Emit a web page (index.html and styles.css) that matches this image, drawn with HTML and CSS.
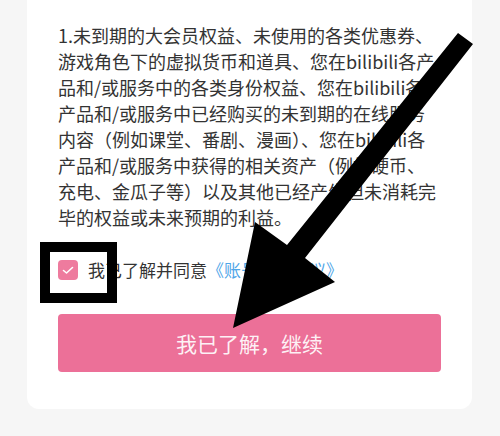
FILE: index.html
```html
<!DOCTYPE html>
<html lang="zh-CN">
<head>
<meta charset="utf-8">
<title>账号注销</title>
<link rel="stylesheet" href="styles.css">
</head>
<body>
<div class="page">
  <div class="card">
    <p class="terms">1.未到期的大会员权益、未使用的各类优惠券、游戏角色下的虚拟货币和道具、您在bilibili各产品和/或服务中的各类身份权益、您在bilibili各产品和/或服务中已经购买的未到期的在线服务内容（例如课堂、番剧、漫画）、您在bilibili各产品和/或服务中获得的相关资产（例如硬币、充电、金瓜子等）以及其他已经产生但未消耗完毕的权益或未来预期的利益。</p>
    <div class="agree">
      <span class="checkbox">
        <svg width="20" height="20" viewBox="0 0 20 20"><polyline points="5.5,10.5 8.5,13 14.5,7.5" fill="none" stroke="#fff" stroke-width="1.6" stroke-linecap="round" stroke-linejoin="round"/></svg>
      </span>
      <span class="agree-text">我已了解并同意</span><span class="link">《账号注销协议》</span>
    </div>
    <button class="continue">我已了解，继续</button>
  </div>
  <div class="mark-box"></div>
  <svg class="arrow" width="500" height="436" viewBox="0 0 500 436">
    <polygon points="458,33 473,44 305,258 335,282 233,328 255,222 287,245" fill="#000"/>
  </svg>
</div>
</body>
</html>
```

FILE: styles.css
```css
html, body {
  margin: 0;
  padding: 0;
  background: #f6f6f6;
}
.page {
  position: relative;
  width: 500px;
  height: 436px;
  overflow: hidden;
  font-family: "Noto Sans CJK SC", "Noto Sans", sans-serif;
}
.card {
  margin-left: 27px;
  width: 445px;
  box-sizing: border-box;
  background: #fff;
  border-radius: 0 0 12px 12px;
  padding: 22px 31px 37px 31px;
  display: flex;
  flex-direction: column;
}
.terms {
  margin: 0;
  font-size: 18px;
  line-height: 26px;
  color: #333;
  padding-right: 4px;
}
.agree {
  margin-top: 30px;
  height: 20px;
  display: flex;
  align-items: center;
  font-size: 17px;
  line-height: 20px;
}
.checkbox {
  width: 20px;
  height: 20px;
  border-radius: 4px;
  background: #ee7b9e;
  display: flex;
  margin-right: 10px;
}
.agree-text {
  color: #333;
}
.link {
  color: #4fa6e8;
}
.continue {
  margin-top: 34px;
  height: 58px;
  width: 383px;
  border: none;
  border-radius: 4px;
  background: #ec7098;
  color: rgba(255, 255, 255, 0.92);
  font-family: inherit;
  font-size: 21px;
  padding: 0;
}
.mark-box {
  position: absolute;
  left: 40px;
  top: 242px;
  width: 77px;
  height: 61px;
  box-sizing: border-box;
  border: 10px solid #000;
}
.arrow {
  position: absolute;
  left: 0;
  top: 0;
  pointer-events: none;
}
```
